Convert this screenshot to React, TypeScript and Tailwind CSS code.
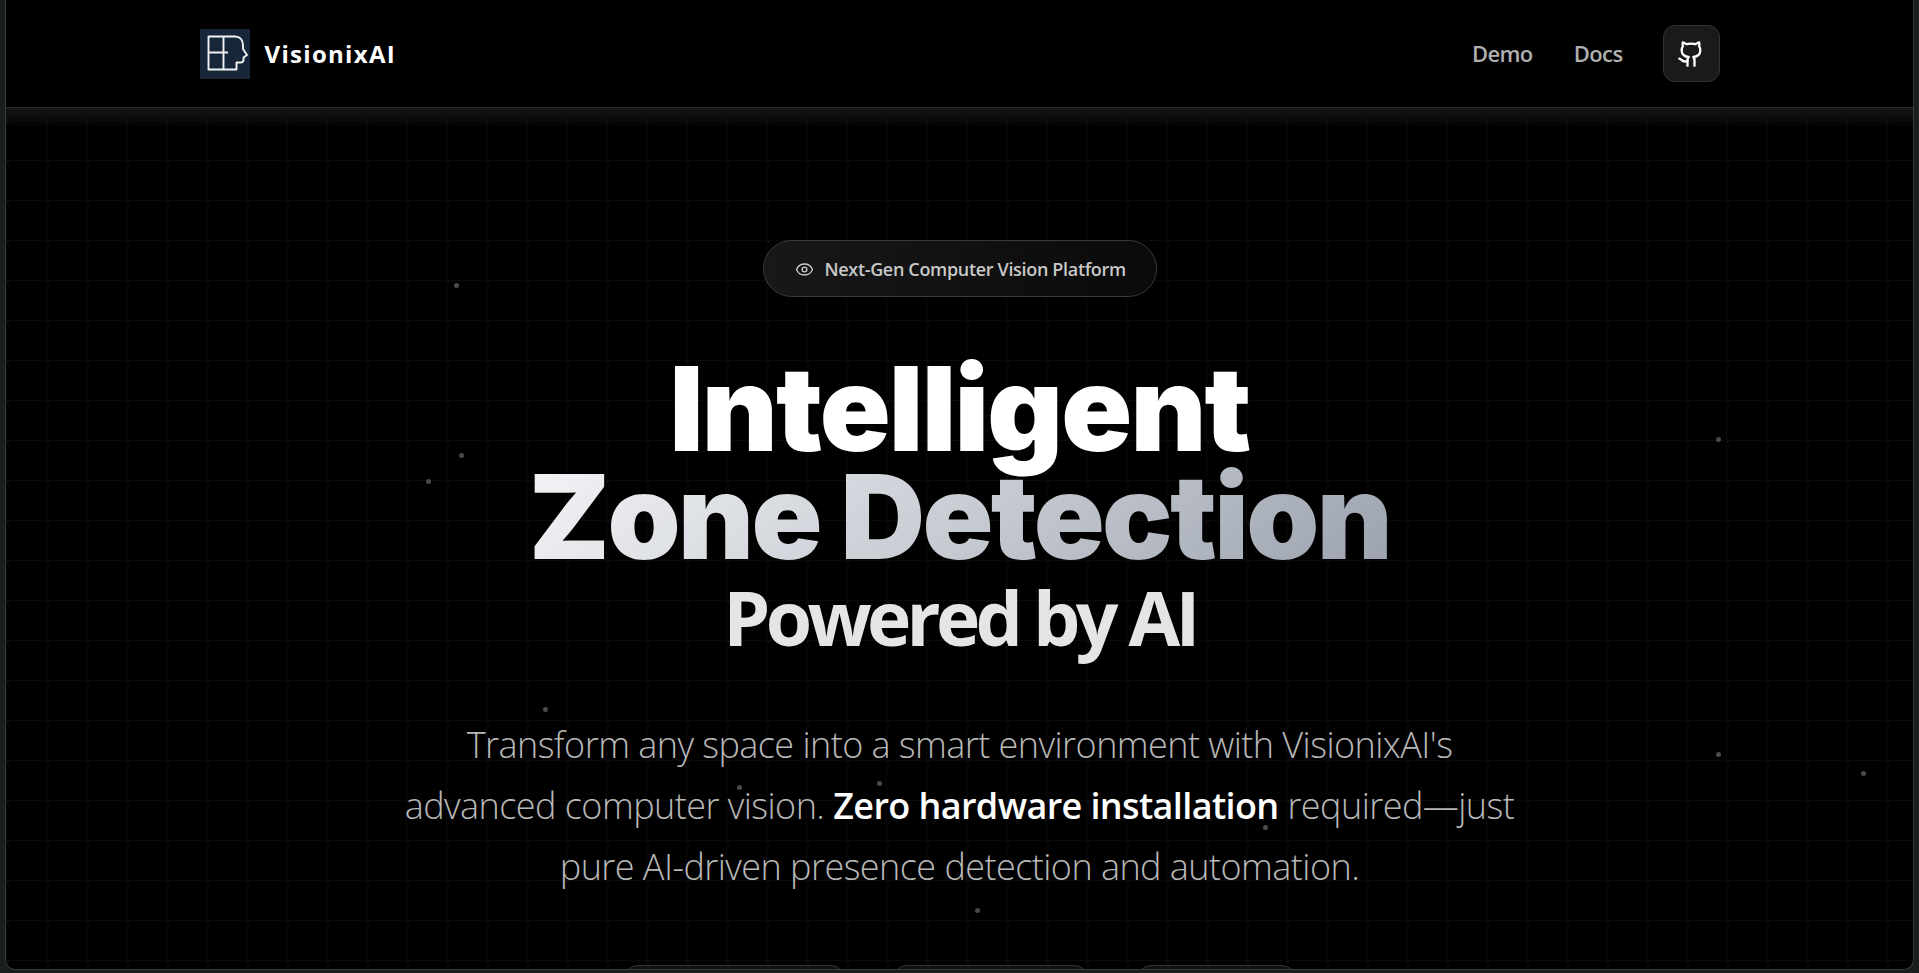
import { Eye, Github } from "lucide-react";

const particles = [
    "left-[448px] top-[283px]",
    "left-[453px] top-[453px]",
    "left-[420px] top-[479px]",
    "left-[537px] top-[707px]",
    "left-[731px] top-[785px]",
    "left-[871px] top-[781px]",
    "left-[1257px] top-[825px]",
    "left-[969px] top-[908px]",
    "left-[1710px] top-[437px]",
    "left-[1710px] top-[752px]",
    "left-[1855px] top-[771px]",
];

const Logo = () => (
    <div className="w-[50px] h-[50px] bg-[#172638]">
        <svg width="50" height="50" viewBox="0 0 50 50" fill="none" stroke="#f2f2f2" strokeWidth="1.9" strokeLinejoin="round">
            <path d="M8.5 7.5H35C40 7.5 43 11 43 16.5V20L47 26L43.5 28.5V31C43.5 32.5 42 33.5 40.5 33.5H36.5V40.5H8.5Z" />
            <path d="M23.5 7.5V40.5M8.5 23.5H28" />
        </svg>
    </div>
);

const App = () => {
    return (
        <div className="h-screen bg-[#1a1f1e] px-[5px] pb-[3px] font-['Open_Sans',sans-serif]">
            <div className="relative h-full flex flex-col overflow-hidden bg-black border-x border-b border-[#3a3a3a] rounded-b-[10px]">
                <div className="absolute inset-0 bg-[radial-gradient(circle,#121212_1px,transparent_1.5px),linear-gradient(#0a0a0a_1px,transparent_1px),linear-gradient(90deg,#0a0a0a_1px,transparent_1px)] bg-[size:40px_40px] bg-[position:22px_22px,0px_0px,0px_0px]" />
                {particles.map((pos) => (
                    <span key={pos} className={`absolute w-[5px] h-[5px] rounded-full bg-[#4a4a4a] ${pos}`} />
                ))}

                <header className="relative shrink-0 h-[108px] bg-black border-b border-[#2e2e2e]">
                    <div className="w-[1520px] mx-auto h-[107px] flex items-center justify-between">
                        <div className="flex items-center gap-[15px]">
                            <Logo />
                            <span className="text-white text-[24px] font-bold tracking-[1.3px]">VisionixAI</span>
                        </div>
                        <nav className="flex items-center">
                            <a className="text-[#b0b0b0] text-[22px] font-semibold tracking-[-0.6px]">Demo</a>
                            <a className="ml-[41px] text-[#b0b0b0] text-[22px] font-semibold tracking-[-0.6px]">Docs</a>
                            <button className="ml-[40px] w-[57px] h-[57px] flex items-center justify-center bg-[#1a1a1a] border border-[#333] rounded-xl text-white">
                                <Github size={28} strokeWidth={2} />
                            </button>
                        </nav>
                    </div>
                </header>

                <main className="relative flex-1 flex flex-col items-center pt-[132px]">
                    <div className="absolute top-0 inset-x-0 h-[20px] bg-gradient-to-b from-[#161616] to-transparent" />
                    <div className="relative flex items-center gap-[11px] w-[394px] h-[57px] pl-[31px] pt-[1px] rounded-full border border-[#3a3a3a] bg-gradient-to-r from-[#181818] to-[#0a0a0a] text-[#c8c8c8]">
                        <Eye size={19} strokeWidth={1.75} />
                        <span className="text-[18px] font-semibold tracking-[-0.33px]">Next-Gen Computer Vision Platform</span>
                    </div>

                    <h1 className="mt-[58px] text-center font-['Inter',sans-serif]">
                        <span className="block text-white text-[117px] leading-[108px] font-black tracking-[-1.8px]">Intelligent</span>
                        <span className="block text-[117px] leading-[108px] font-black tracking-[-2.6px] bg-[linear-gradient(135deg,#f3f4f6,#9ca3af)] bg-clip-text text-transparent">Zone Detection</span>
                        <span className="block mt-[4px] text-[#e5e5e5] text-[75px] leading-[84px] font-bold font-['Open_Sans',sans-serif] tracking-[-4.7px]">Powered by AI</span>
                    </h1>

                    <p className="mt-[55px] text-center text-[36px] leading-[61px] font-light text-[#b8b8b8] tracking-[-0.55px]">
                        Transform any space into a smart environment with VisionixAI's
                        <br />
                        advanced computer vision. <strong className="font-semibold text-white tracking-[-0.62px]">Zero hardware installation</strong> required—just
                        <br />
                        pure AI-driven presence detection and automation.
                    </p>

                    <div className="mt-[68px] flex gap-[48px]">
                        <div className="w-[221px] h-[64px] rounded-[14px] border border-[#333] bg-[#111]" />
                        <div className="w-[196px] h-[64px] rounded-[14px] border border-[#333] bg-[#111]" />
                        <div className="w-[159px] h-[64px] rounded-[14px] border border-[#333] bg-[#111]" />
                    </div>
                </main>
            </div>
        </div>
    );
};

export default App;
